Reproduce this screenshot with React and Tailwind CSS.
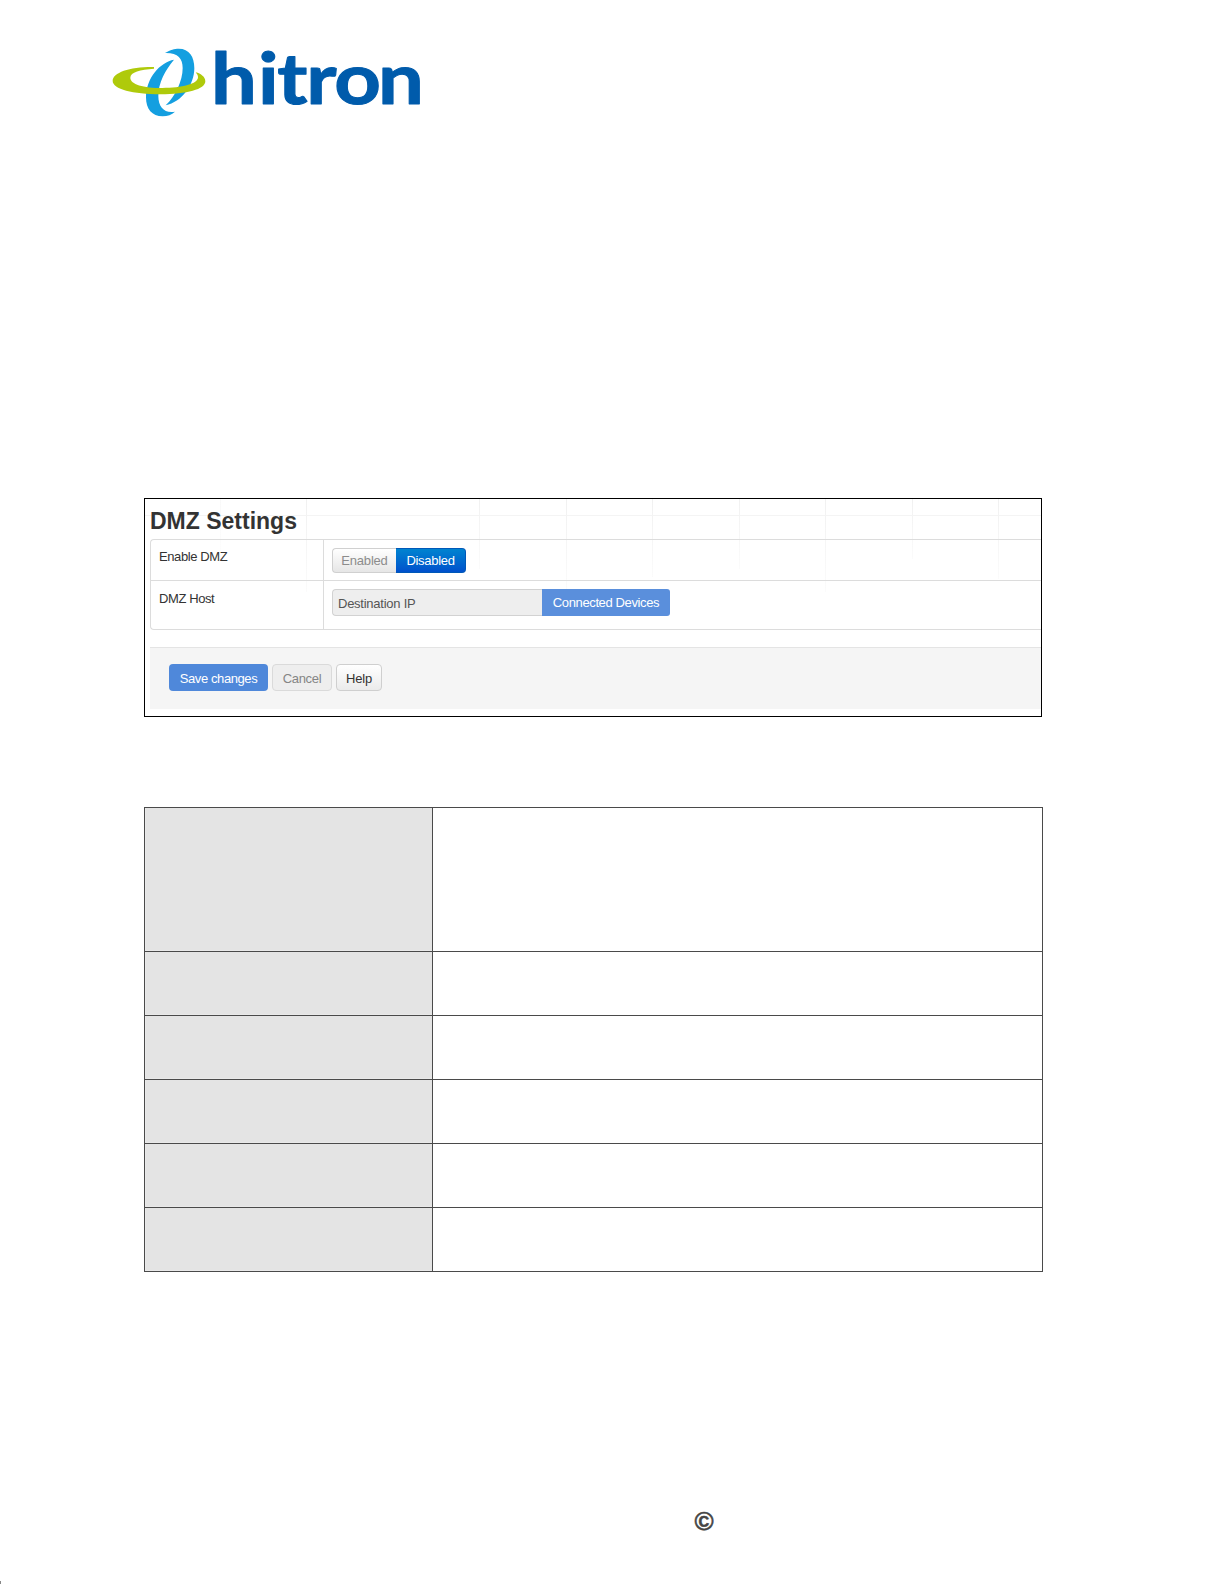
import React from "react";

const GRID_LINES = [
  { x: 75, cls: "h-[60px] opacity-40" },
  { x: 161, cls: "h-[93px]" },
  { x: 334, cls: "h-[70px]" },
  { x: 421, cls: "h-[93px]" },
  { x: 507, cls: "h-[78px]" },
  { x: 594, cls: "h-[70px]" },
  { x: 680, cls: "h-[93px]" },
  { x: 767, cls: "h-[60px]" },
  { x: 853, cls: "h-[80px]" },
];

function Logo() {
  return (
    <svg className="ml-[100px] block h-[115px] w-[340px]" viewBox="0 -45 1020 345" aria-label="hitron">
      <path
        d="M195 39 C212 29 223 26 236 26 C268 26 283 50 283 85 C283 134 245 187 197 196 C226 170 248 122 248 84 C248 56 234 38 195 39Z"
        fill="#149fe0"
      />
      <path
        d="M222 59 C181 66 138 114 138 172 C138 207 156 229 188 229 C203 229 215 224 225 215 C194 221 175 202 175 168 C175 128 196 90 222 59Z"
        fill="#149fe0"
      />
      <path
        d="M162 81 C91 80 38 97 38 123 C38 147 99 163 181 163 C260 163 316 148 316 124 C316 111 303 101 287 97 C292 103 294 107 294 112 C294 132 246 144 187 144 C130 144 91 133 91 113 C91 96 121 89 162 86Z"
        fill="#afca0b"
      />
      <text
        x="289.6 412 462.6 538.3 611 725"
        y="192"
        transform="scale(1.15 1)"
        className="font-['Lato',sans-serif] text-[212px] font-bold"
        fill="#005bab"
        stroke="#005bab"
        strokeWidth="3"
        strokeLinejoin="round"
      >
        hitron
      </text>
    </svg>
  );
}

function SettingsPanel() {
  return (
    <section className="relative ml-[144px] mt-[358px] h-[219px] w-[898px] overflow-hidden border border-black bg-white pl-[5px] font-['Liberation_Sans',sans-serif] text-[13px] text-[#333]">
      <div className="absolute left-0 right-0 top-[16px] h-px bg-[#f4f4f4]" />
      {GRID_LINES.map((line) => (
        <div
          key={line.x}
          className={`absolute top-0 w-px bg-gradient-to-b from-[#f1f1f1] to-[#fbfbfb] ${line.cls}`}
          style={{ left: line.x }}
        />
      ))}
      <h1 className="relative h-[40px] pt-[6px] text-[23px] font-bold leading-[33px]">DMZ Settings</h1>
      <div className="relative h-[91px] rounded-l-[4px] border border-r-0 border-[#dcdcdc]">
        <div className="flex h-[41px] border-b border-[#dcdcdc]">
          <div className="w-[173px] border-r border-[#dcdcdc] pl-[8px] pt-[8px] leading-[18px] tracking-[-0.4px]">Enable DMZ</div>
          <div className="flex pl-[8px] pt-[8px]">
            <button className="h-[25px] w-[64px] rounded-l-[4px] border border-r-0 border-[#d0d0d0] bg-gradient-to-b from-white to-[#e6e6e6] leading-[23px] tracking-[-0.2px] text-[#8c8c8c]">Enabled</button>
            <button className="h-[25px] w-[70px] rounded-r-[4px] border border-l-0 border-[#0058b8] bg-gradient-to-b from-[#0083d0] to-[#0050cc] leading-[23px] tracking-[-0.3px] text-white">Disabled</button>
          </div>
        </div>
        <div className="flex h-[48px]">
          <div className="w-[173px] border-r border-[#dcdcdc] pl-[8px] pt-[9px] leading-[18px] tracking-[-0.4px]">DMZ Host</div>
          <div className="flex pl-[8px] pt-[8px]">
            <div className="h-[27px] w-[210px] rounded-l-[4px] border border-r-0 border-[#d2d2d2] bg-[#eeeeee] pl-[5px] leading-[27px] tracking-[-0.25px] text-[#555]">Destination IP</div>
            <button className="h-[27px] w-[128px] rounded-r-[3px] bg-[#5a8fdc] leading-[28px] tracking-[-0.38px] text-white">Connected Devices</button>
          </div>
        </div>
      </div>
      <footer className="mt-[17px] flex h-[62px] gap-[4px] border-t border-[#e4e4e4] bg-[#f5f5f5] pl-[19px] pt-[16px]">
        <button className="h-[27px] w-[99px] rounded-[4px] bg-[#4f88da] leading-[29px] tracking-[-0.4px] text-white">Save changes</button>
        <button className="h-[27px] w-[60px] rounded-[4px] border border-[#dadada] bg-[#eeeeee] leading-[27px] tracking-[-0.3px] text-[#858585]">Cancel</button>
        <button className="h-[27px] w-[46px] rounded-[4px] border border-[#cfcfcf] bg-gradient-to-b from-white to-[#ebebeb] leading-[27px] tracking-[-0.2px] text-[#333]">Help</button>
      </footer>
    </section>
  );
}

function DescriptionTable() {
  const rows = ["h-[144px]", "h-[64px]", "h-[64px]", "h-[64px]", "h-[64px]", "h-[64px]"];
  return (
    <div className="ml-[144px] mt-[90px] w-[899px] border-l border-t border-[#4a4a4a]">
      {rows.map((height, i) => (
        <div key={i} className={`flex ${height}`}>
          <div className="w-[288px] border-b border-r border-[#4a4a4a] bg-[#e4e4e4] shadow-[inset_1px_-1px_0_#e9e9e9]" />
          <div className="flex-1 border-b border-r border-[#4a4a4a]" />
        </div>
      ))}
    </div>
  );
}

export default function App() {
  return (
    <main className="relative h-[1584px] w-[1224px] overflow-hidden bg-white pt-[25px]">
      <Logo />
      <SettingsPanel />
      <DescriptionTable />
      <div className="ml-[684px] mt-[233px] w-[40px] text-center font-['Liberation_Sans',sans-serif] text-[26px] font-bold leading-[32px] text-[#454545] [-webkit-text-stroke:0.5px_#454545]">
        ©
      </div>
      <div className="absolute bottom-0 left-0 h-[3px] w-px bg-[#888]" />
    </main>
  );
}
